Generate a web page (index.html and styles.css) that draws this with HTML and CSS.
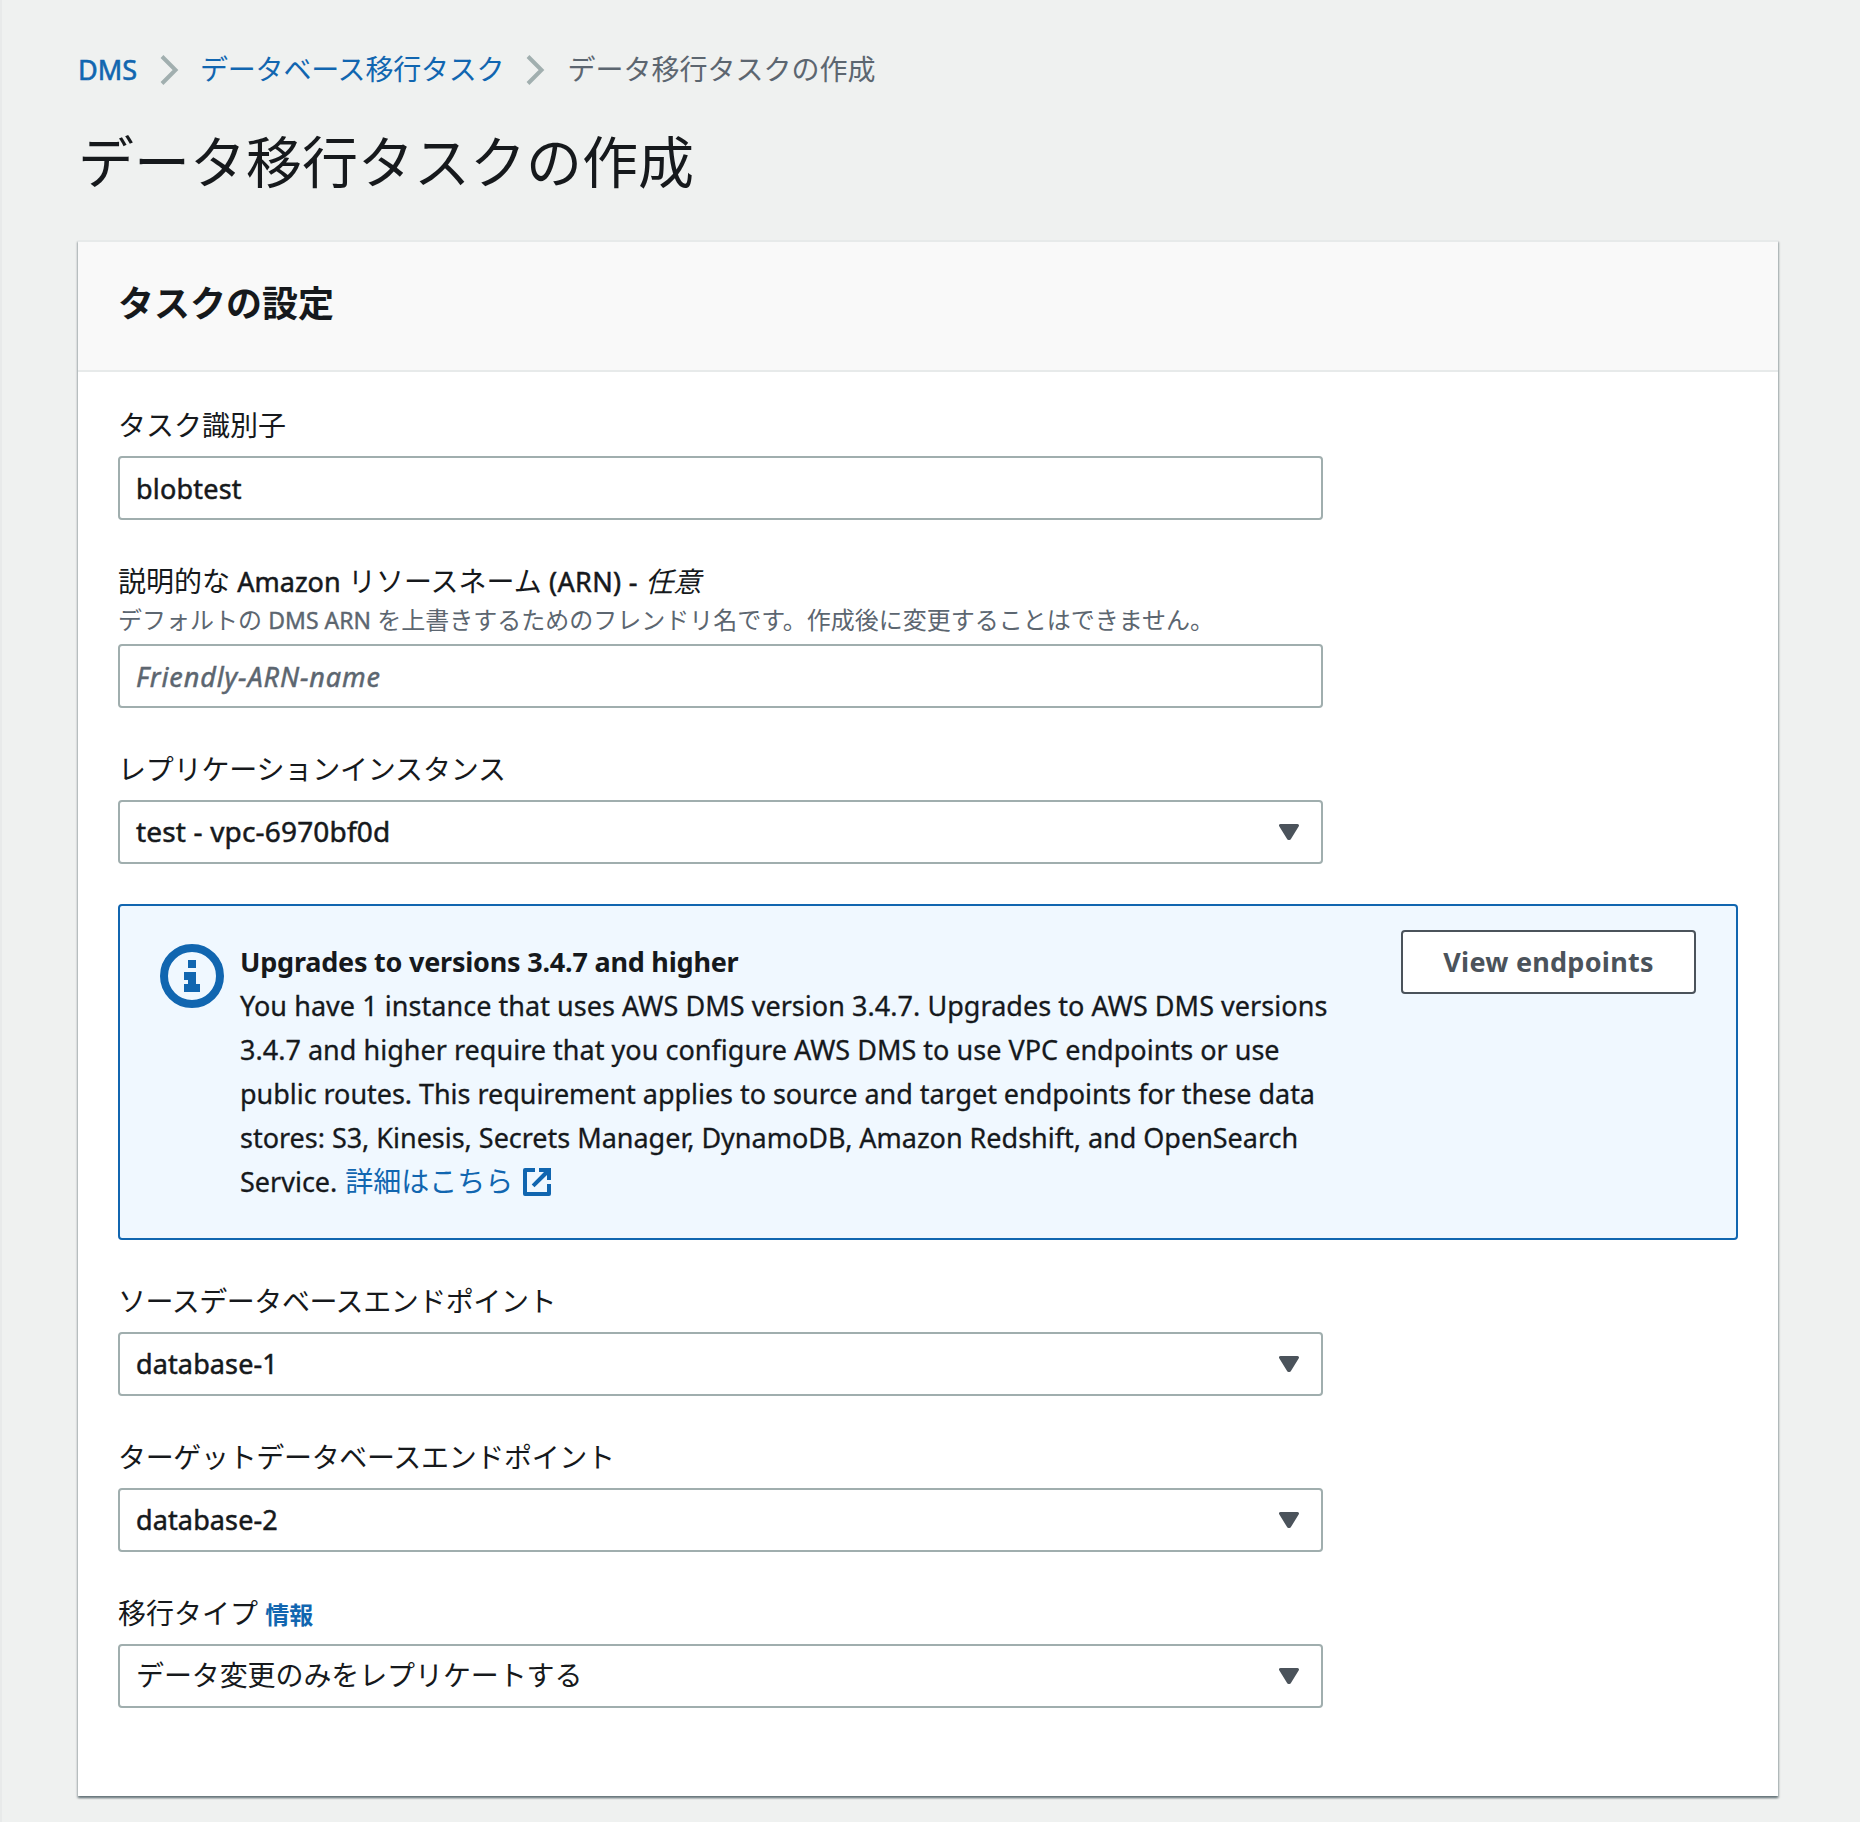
FILE: index.html
```html
<!DOCTYPE html>
<html lang="ja">
<head>
<meta charset="utf-8">
<title>データ移行タスクの作成</title>
<link rel="stylesheet" href="styles.css">
</head>
<body>
<main class="page">
  <nav class="breadcrumb">
    <a class="link latin" href="#">DMS</a>
    <svg class="chevron" viewBox="0 0 20 32"><path d="M3 2.500 16.500 16 3 29.500"/></svg>
    <a class="link parent" href="#">データベース移行タスク</a>
    <svg class="chevron" viewBox="0 0 20 32"><path d="M3 2.500 16.500 16 3 29.500"/></svg>
    <span class="current">データ移行タスクの作成</span>
  </nav>
  <h1 class="title">データ移行タスクの作成</h1>

  <section class="card">
    <header class="card-header"><h2>タスクの設定</h2></header>
    <div class="card-body">
      <div class="field">
        <label class="label">タスク識別子</label>
        <div class="control"><span class="value wide">blobtest</span></div>
      </div>
      <div class="field">
        <label class="label">説明的な <span class="latin-label">Amazon</span> リソースネーム <span class="arn">(ARN) - </span><i>任意</i></label>
        <p class="hint">デフォルトの <span class="hint-latin">DMS ARN</span> を上書きするためのフレンドリ名です。作成後に変更することはできません。</p>
        <div class="control"><span class="value placeholder">Friendly-ARN-name</span></div>
      </div>
      <div class="field">
        <label class="label snug">レプリケーションインスタンス</label>
        <div class="control"><span class="value id">test - vpc-6970bf0d</span><svg class="caret" viewBox="0 0 20 16"><path d="M1.500 1.500h17L10.500 14.500h-1z"/></svg></div>
      </div>

      <div class="alert">
        <svg class="info" viewBox="0 0 64 64"><circle cx="32" cy="32" r="28"/><path d="M28 16h8v8h-8zM24 28h12v12h4v8H24v-8h4v-4h-4z"/></svg>
        <div class="alert-text">
          <strong>Upgrades to versions 3.4.7 and higher</strong>
          <p><span class="loose">You have 1 instance that uses AWS DMS version 3.4.7. Upgrades to AWS DMS versions</span><br><span class="even">3.4.7 and higher require that you configure AWS DMS to use VPC endpoints or use</span><br><span class="close">public routes. This requirement applies to source and target endpoints for these data</span><br><span class="near">stores: S3, Kinesis, Secrets Manager, DynamoDB, Amazon Redshift, and OpenSearch</span><br>Service. <a class="link more" href="#">詳細はこちら<svg class="external" viewBox="0 0 28 28"><path d="M12 0v4H4v20h20v-8h4v10a2 2 0 0 1-2 2H2a2 2 0 0 1-2-2V2a2 2 0 0 1 2-2zM16 0h12v12h-4V7L11.500 19.300 8.700 16.500 21 4h-5z"/></svg></a></p>
        </div>
        <button class="button">View endpoints</button>
      </div>

      <div class="field">
        <label class="label tighter">ソースデータベースエンドポイント</label>
        <div class="control"><span class="value name">database-1</span><svg class="caret" viewBox="0 0 20 16"><path d="M1.500 1.500h17L10.500 14.500h-1z"/></svg></div>
      </div>
      <div class="field">
        <label class="label tight">ターゲットデータベースエンドポイント</label>
        <div class="control"><span class="value name">database-2</span><svg class="caret" viewBox="0 0 20 16"><path d="M1.500 1.500h17L10.500 14.500h-1z"/></svg></div>
      </div>
      <div class="field">
        <label class="label">移行タイプ <a class="link help" href="#">情報</a></label>
        <div class="control"><span class="value jp">データ変更のみをレプリケートする</span><svg class="caret" viewBox="0 0 20 16"><path d="M1.500 1.500h17L10.500 14.500h-1z"/></svg></div>
      </div>
    </div>
  </section>
</main>
</body>
</html>
```
FILE: styles.css
```css
* { box-sizing: border-box; }
body {
  margin: 0;
  background: #eff1f0;
  color: #16191c;
  font: 28px/44px "Noto Sans", "Noto Sans CJK JP", sans-serif;
}
h1, h2, p { margin: 0; }
.page {
  height: 1822px;
  padding: 47px 82px 0 76px;
  border-left: 2px solid #e8eaea;
  overflow: hidden;
}
.link { color: #1166b0; text-decoration: none; }

.breadcrumb { display: flex; align-items: center; height: 44px; white-space: nowrap; }
.breadcrumb .latin { width: 60px; padding-top: 1px; font-size: 27px; -webkit-text-stroke: .6px; }
.breadcrumb .parent { letter-spacing: -.2px; }
.chevron {
  width: 20px; height: 32px; margin: 1px 21px 0;
  fill: none; stroke: #a1afaf; stroke-width: 4;
}
.current { padding-left: 1px; color: #5c6670; }
.title { height: 149px; padding-top: 32px; font-size: 56px; line-height: 76px; font-weight: 400; }

.card {
  height: 1556px;
  background: #fff;
  border-top: 2px solid #e7eaea;
  box-shadow: 0 2px 2px 0 rgba(0, 28, 36, .3), 1px 2px 2px 0 rgba(0, 28, 36, .25), -1px 2px 2px 0 rgba(0, 28, 36, .2);
}
.card-header {
  height: 130px;
  padding: 40px 40px 0;
  background: #f9f9f9;
  border-bottom: 2px solid #e7eaea;
}
.card-header h2 { font-size: 36px; line-height: 44px; }
.card-body { display: flex; flex-direction: column; gap: 40px; padding: 32px 40px; }

.field { width: 1205px; }
.label { display: block; height: 44px; margin-bottom: 8px; line-height: 42px; white-space: nowrap; }
.label:has(+ .hint) { margin-bottom: 0; }
.snug { letter-spacing: -.18px; }
.tight { letter-spacing: -.33px; }
.tighter { letter-spacing: -.45px; }
.latin-label { font-size: 27px; -webkit-text-stroke: .5px; }
.arn { font-size: 27px; letter-spacing: .35px; -webkit-text-stroke: .5px; }
.hint { height: 32px; margin-bottom: 8px; color: #5c6670; font-size: 24px; line-height: 31px; white-space: nowrap; }
.hint-latin { font-size: 23px; -webkit-text-stroke: .4px; }
.help { font-size: 24px; font-weight: 700; }
.control {
  display: flex; align-items: center; justify-content: space-between;
  height: 64px; padding: 0 22px 0 16px;
  background: #fff;
  border: 2px solid #a0aeae;
  border-radius: 4px;
}
.value { height: 44px; font-size: 27px; line-height: 45px; -webkit-text-stroke: .5px; }
.wide { letter-spacing: .2px; }
.name { line-height: 43px; letter-spacing: .12px; }
.id { font-size: 28px; line-height: 43px; letter-spacing: .17px; }
.jp { font-size: 28px; line-height: 42px; letter-spacing: -.1px; -webkit-text-stroke: 0; }
.placeholder { color: #5c6670; font-style: italic; letter-spacing: .9px; }
.caret { width: 20px; height: 16px; fill: #4b535b; stroke: #4b535b; stroke-width: 3; stroke-linejoin: round; }

.alert {
  display: flex;
  height: 336px;
  padding: 24px 40px 0;
  background: #f0f8ff;
  border: 2px solid #1166b0;
  border-radius: 4px;
}
.info { flex: none; width: 64px; height: 64px; margin-top: 14px; fill: #1166b0; }
.info circle { fill: none; stroke: #1166b0; stroke-width: 8; }
.alert-text { flex: 1; margin: 10px 0 0 16px; font-size: 27px; white-space: nowrap; }
.alert-text strong { display: block; letter-spacing: -.22px; }
.alert-text p { -webkit-text-stroke: .3px; }
.loose { letter-spacing: .045px; }
.even { letter-spacing: .02px; }
.close { letter-spacing: -.04px; }
.near { letter-spacing: -.02px; }
.more { margin-left: 1px; font-size: 28px; line-height: 40px; -webkit-text-stroke: 0; }
.external { width: 28px; height: 28px; margin-left: 10px; vertical-align: -4px; fill: #1166b0; }
.button {
  width: 295px; height: 64px; padding: 0;
  color: #4b535b; background: #fff;
  border: 2px solid #4b535b; border-radius: 4px;
  font: 700 27px/44px "Noto Sans", sans-serif;
  letter-spacing: .25px;
}
```
